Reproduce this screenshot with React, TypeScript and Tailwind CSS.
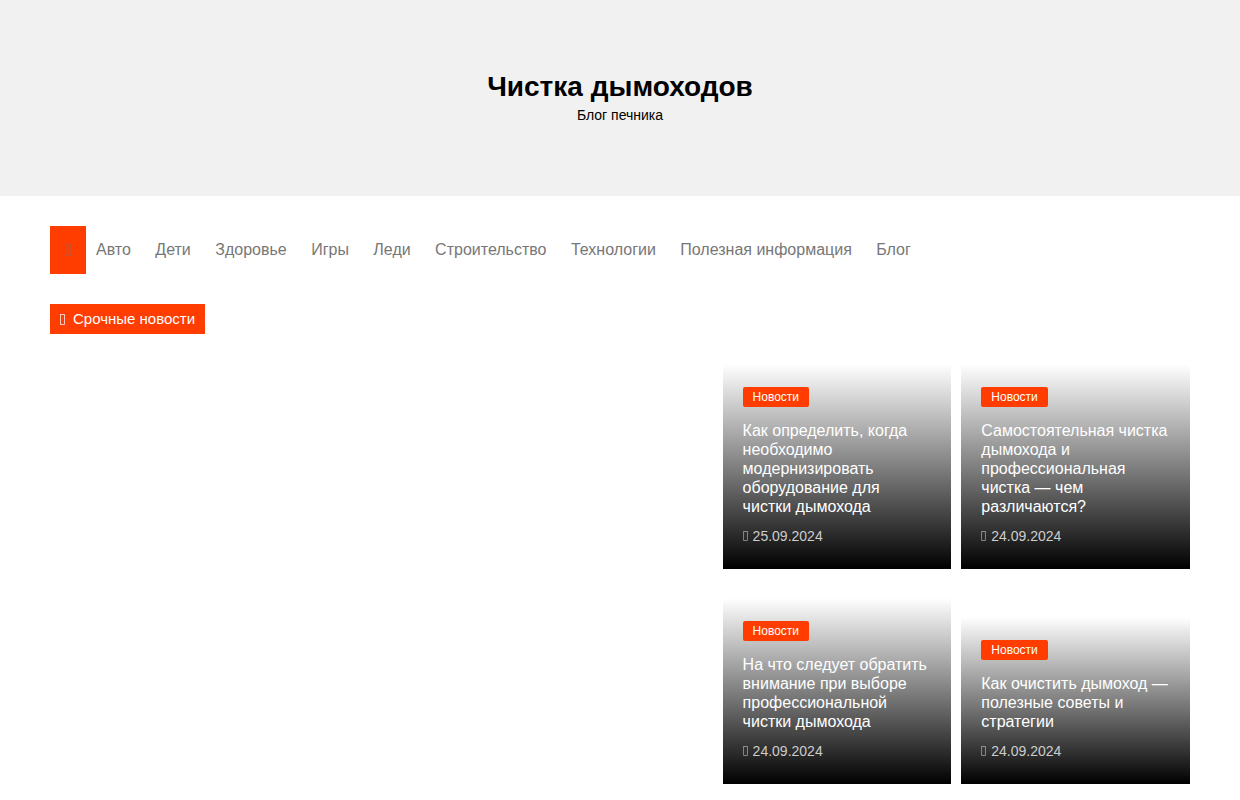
import React, { Fragment } from "react";

const menu = [
  "Авто",
  "Дети",
  "Здоровье",
  "Игры",
  "Леди",
  "Строительство",
  "Технологии",
  "Полезная информация",
  "Блог",
];

const posts = [
  { id: 1, title: "Как определить, когда необходимо модернизировать оборудование для чистки дымохода", date: "25.09.2024" },
  { id: 2, title: "Самостоятельная чистка дымохода и профессиональная чистка — чем различаются?", date: "24.09.2024" },
  { id: 3, title: "На что следует обратить внимание при выборе профессиональной чистки дымохода", date: "24.09.2024" },
  { id: 4, title: "Как очистить дымоход — полезные советы и стратегии", date: "24.09.2024" },
];

// Narrow outlined box used as the icon everywhere
function BoxIcon({ className }: { className: string }) {
  return (
    <svg viewBox="0 0 5 11" fill="none" stroke="currentColor" aria-hidden="true" className={className}>
      <rect x="0.5" y="0.5" width="4" height="10" strokeWidth="0.8" />
    </svg>
  );
}

function PostCard({ title, date }: { title: string; date: string }) {
  return (
    <article className="bg-linear-to-b from-transparent to-black px-5 py-[23px]">
      <a href="#" className="block w-fit rounded-xs bg-[#ff3d00] px-2.5 text-xs leading-5 text-white">
        Новости
      </a>
      <h3 className="mt-3.5 text-base leading-[19px] text-white">
        <a href="#">{title}</a>
      </h3>
      <div className="mt-2.5 flex items-center gap-[5px] text-sm leading-5 text-[#ccc]">
        <BoxIcon className="h-[10px] w-[5px] opacity-80" />
        <a href="#">{date}</a>
      </div>
    </article>
  );
}

export default function App() {
  return (
    <div className="bg-white font-['Liberation_Sans',Arial,sans-serif]">
      {/* Header */}
      <header className="bg-[#f1f1f1] px-4 py-[70px] text-center text-black">
        <h1 className="text-[28px] leading-[34px] font-bold">
          <a href="#">Чистка дымоходов</a>
        </h1>
        <p className="text-sm leading-[22px]">Блог печника</p>
      </header>

      <div className="mx-auto max-w-[1180px] px-5">
        {/* Menu */}
        <nav className="flex py-[30px] text-base leading-[48px] text-[#777]">
          <a href="#" aria-label="Главная" className="flex w-9 shrink-0 items-center justify-center bg-[#ff3d00]">
            <BoxIcon className="h-3 w-[6px] opacity-60" />
          </a>
          <ul>
            {menu.map((item) => (
              <Fragment key={item}>
                <li className="inline-block px-2.5">
                  <a href="#">{item}</a>
                </li>{" "}
              </Fragment>
            ))}
          </ul>
        </nav>

        {/* Breaking news */}
        <div className="flex w-fit items-center gap-2 bg-[#ff3d00] px-2.5 text-[15px] leading-[30px] text-white">
          <BoxIcon className="h-[11px] w-[5px] opacity-90" />
          <span>Срочные новости</span>
        </div>

        {/* Featured posts */}
        <main className="flex justify-end pt-[30px] pb-4">
          <section className="grid w-[41%] auto-rows-fr grid-cols-2 items-end gap-2.5">
            {posts.map((post) => (
              <PostCard key={post.id} title={post.title} date={post.date} />
            ))}
          </section>
        </main>
      </div>
    </div>
  );
}
